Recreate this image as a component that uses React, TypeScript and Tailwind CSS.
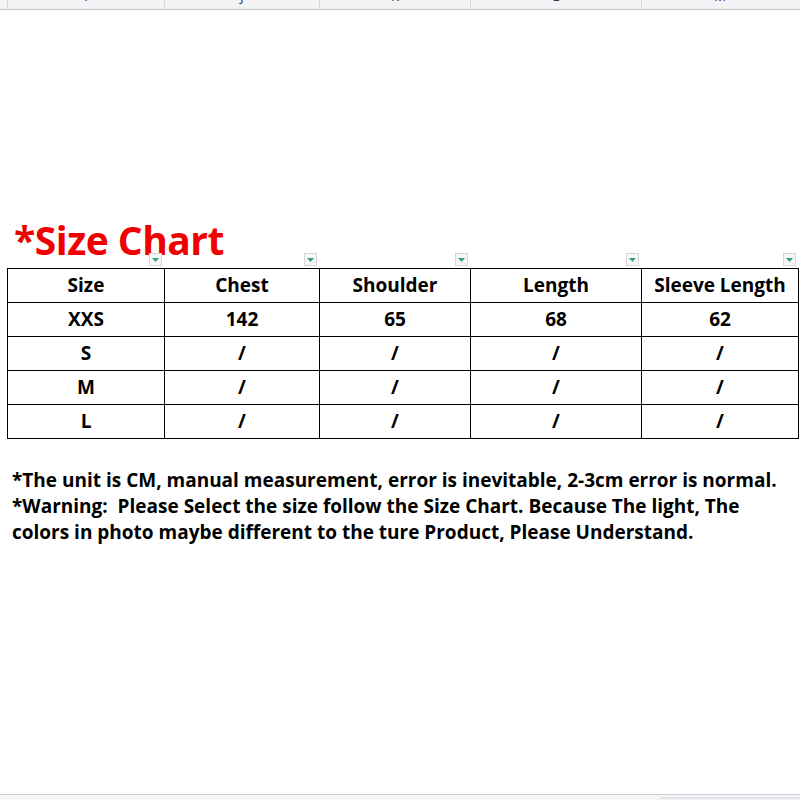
import React from "react";

const cols = ["w-[157px]", "w-[155px]", "w-[151px]", "w-[171px]", "w-[157px]"];
const rows = [
  ["Size", "Chest", "Shoulder", "Length", "Sleeve Length"],
  ["XXS", "142", "65", "68", "62"],
  ["S", "/", "/", "/", "/"],
  ["M", "/", "/", "/", "/"],
  ["L", "/", "/", "/", "/"],
];
const letters = ["I", "J", "K", "L", "M"];

function Filter() {
  return (
    <div className="w-[13px] h-[13px] border border-[#d6d6d6] bg-[#f7f7f7] flex items-center justify-center">
      <svg width="7" height="4" viewBox="0 0 7 4">
        <polygon points="0,0 7,0 3.5,4" fill="#2fa37a" />
      </svg>
    </div>
  );
}

export default function App() {
  const font = { fontFamily: '"Open Sans", "Noto Sans", Arial, sans-serif' };
  return (
    <div className="w-[800px] h-[800px] bg-white flex flex-col overflow-hidden" style={font}>
      {/* top excel header bar */}
      <div className="h-[10px] bg-[#f3f3f5] border-b border-[#c4c4c4] flex">
        <div className="w-[7px]" />
        {cols.map((c, i) => (
          <div key={i} className={`${c} h-[9px] border-l border-[#d8d8d8] relative overflow-hidden`}>
            <span className="absolute left-0 right-0 text-center text-[13px] leading-[13px] top-[-10px] text-[#333]">
              {letters[i]}
            </span>
          </div>
        ))}
      </div>

      <div className="h-[210px]" />

      <div className="pl-[14px] h-[40px] leading-[40px] text-[39px] font-bold text-[#f00000] tracking-[-0.5px]">
        *Size Chart
      </div>

      <div className="flex h-[15px] pl-[8px] mt-[-7px]">
        {cols.map((c, i) => (
          <div key={i} className={`${c} flex justify-end pr-[3px]`}>
            <Filter />
          </div>
        ))}
      </div>

      <div className="ml-[7px] border-l border-t border-black w-[792px]">
        {rows.map((r, ri) => (
          <div key={ri} className="flex">
            {r.map((t, ci) => (
              <div
                key={ci}
                className={`${cols[ci]} h-[34px] border-r border-b border-black flex items-center justify-center text-[19px] font-bold text-black`}
              >
                {t}
              </div>
            ))}
          </div>
        ))}
      </div>

      <div className="mt-[28px] pl-[12px] text-[19px] leading-[26px] font-bold text-black">
        <div>*The unit is CM, manual measurement, error is inevitable, 2-3cm error is normal.</div>
        <div>*Warning:&nbsp; Please Select the size follow the Size Chart. Because The light, The</div>
        <div>colors in photo maybe different to the ture Product, Please Understand.</div>
      </div>

      <div className="flex-1" />
      <div className="h-[6px] border-t border-[#cfcfcf] bg-[#f6f6f8] flex justify-end">
        <div className="w-[140px] h-[2px] mt-[2px] bg-[#e4e4ec]" />
      </div>
    </div>
  );
}
